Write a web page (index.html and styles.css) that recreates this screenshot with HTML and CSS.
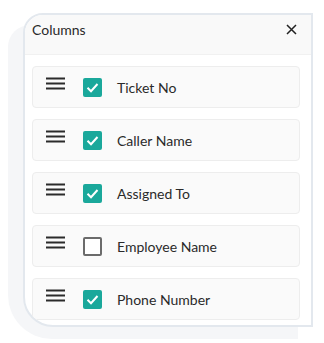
FILE: index.html
```html
<!DOCTYPE html>
<html>
<head>
<meta charset="utf-8">
<link rel="stylesheet" href="styles.css">
</head>
<body>
<div class="backdrop"></div>
<div class="panel">
  <div class="header">
    <span class="title">Columns</span>
    <svg class="close" width="11" height="11" viewBox="0 0 11 11"><path d="M1 1L10 10M10 1L1 10" stroke="#222" stroke-width="1.5" fill="none"/></svg>
  </div>
  <div class="list">
    <div class="row">
      <svg class="drag" width="19" height="13" viewBox="0 0 19 13"><path d="M0 1.5H19M0 6.5H19M0 11.5H19" stroke="#2b2b2b" stroke-width="2"/></svg>
      <span class="box on"><svg width="19" height="19" viewBox="0 0 19 19"><path d="M4.5 9.8L8 13.2L14.5 6" stroke="#fff" stroke-width="2" fill="none"/></svg></span>
      <span class="label">Ticket No</span>
    </div>
    <div class="row">
      <svg class="drag" width="19" height="13" viewBox="0 0 19 13"><path d="M0 1.5H19M0 6.5H19M0 11.5H19" stroke="#2b2b2b" stroke-width="2"/></svg>
      <span class="box on"><svg width="19" height="19" viewBox="0 0 19 19"><path d="M4.5 9.8L8 13.2L14.5 6" stroke="#fff" stroke-width="2" fill="none"/></svg></span>
      <span class="label">Caller Name</span>
    </div>
    <div class="row">
      <svg class="drag" width="19" height="13" viewBox="0 0 19 13"><path d="M0 1.5H19M0 6.5H19M0 11.5H19" stroke="#2b2b2b" stroke-width="2"/></svg>
      <span class="box on"><svg width="19" height="19" viewBox="0 0 19 19"><path d="M4.5 9.8L8 13.2L14.5 6" stroke="#fff" stroke-width="2" fill="none"/></svg></span>
      <span class="label">Assigned To</span>
    </div>
    <div class="row">
      <svg class="drag" width="19" height="13" viewBox="0 0 19 13"><path d="M0 1.5H19M0 6.5H19M0 11.5H19" stroke="#2b2b2b" stroke-width="2"/></svg>
      <span class="box off"></span>
      <span class="label">Employee Name</span>
    </div>
    <div class="row">
      <svg class="drag" width="19" height="13" viewBox="0 0 19 13"><path d="M0 1.5H19M0 6.5H19M0 11.5H19" stroke="#2b2b2b" stroke-width="2"/></svg>
      <span class="box on"><svg width="19" height="19" viewBox="0 0 19 19"><path d="M4.5 9.8L8 13.2L14.5 6" stroke="#fff" stroke-width="2" fill="none"/></svg></span>
      <span class="label">Phone Number</span>
    </div>
  </div>
</div>
</body>
</html>
```
FILE: styles.css
```css
html, body {
  margin: 0;
  padding: 0;
  background: #fff;
}
body {
  position: relative;
  width: 324px;
  height: 343px;
  overflow: hidden;
  font-family: Lato, "Open Sans", sans-serif;
  color: #333;
}
.backdrop {
  position: absolute;
  left: 8px;
  top: 25px;
  width: 290px;
  height: 314px;
  background: #f5f6f8;
  border-radius: 22px 0 0 44px;
}
.panel {
  position: relative;
  margin: 13px 0 0 23px;
  width: 286px;
  height: 310px;
  border: 2px solid #e3e8ee;
  border-radius: 20px 0 0 30px;
  background: #fff;
  overflow: hidden;
}
.header {
  height: 40px;
  background: #f9f9f9;
  border-bottom: 1px solid #f1f1f1;
  display: flex;
  align-items: center;
  justify-content: space-between;
  padding: 0 14px 0 7px;
  box-sizing: border-box;
}
.title {
  font-size: 14px;
  color: #2a2a2a;
  margin-top: -10px;
}
.close {
  margin-top: -10px;
}
.list {
  display: flex;
  flex-direction: column;
  gap: 11px;
  padding: 11px 11px 0 7px;
}
.row {
  height: 42px;
  box-sizing: border-box;
  border: 1px solid #ededed;
  border-radius: 4px;
  background: #fafafa;
  display: flex;
  align-items: center;
  padding-left: 13px;
}
.drag {
  margin-top: -8px;
  margin-right: 18px;
}
.box {
  width: 19px;
  height: 19px;
  border-radius: 2px;
  box-sizing: border-box;
  display: block;
  margin-right: 15px;
  margin-top: 1px;
}
.box svg {
  display: block;
}
.box.on {
  background: #1aa89b;
}
.box.off {
  border: 2px solid #6b6b6b;
  background: #fff;
}
.label {
  font-size: 14px;
  color: #2a2a2a;
}
```
